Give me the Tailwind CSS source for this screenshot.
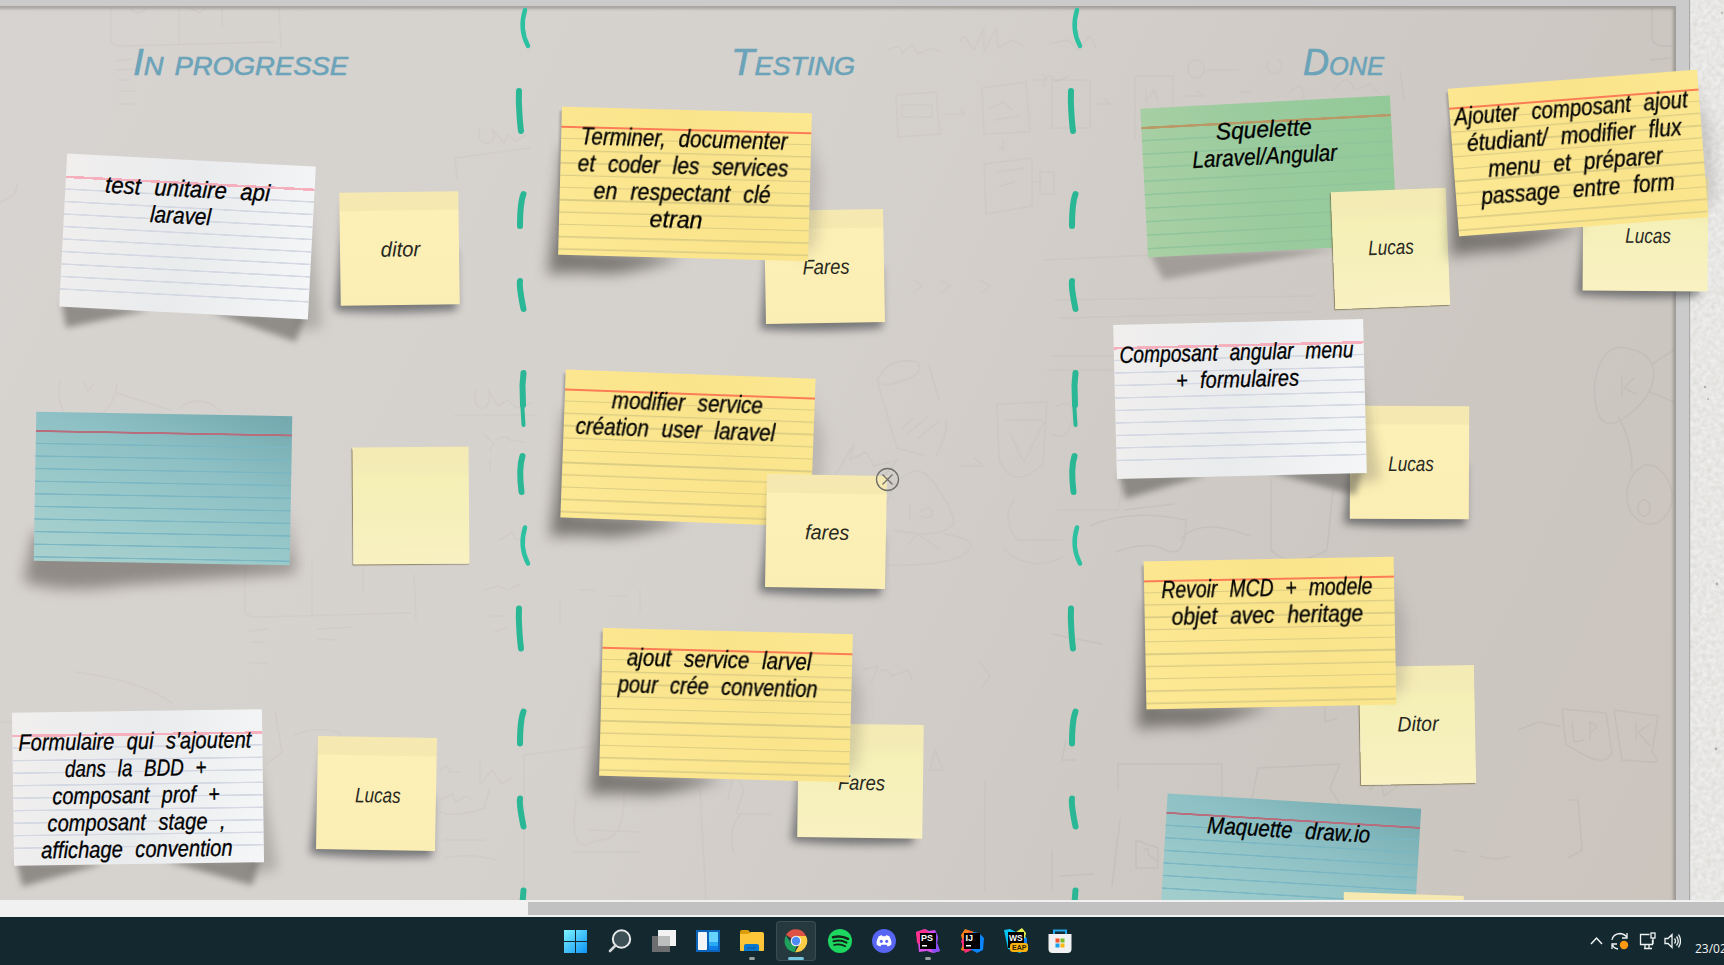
<!DOCTYPE html>
<html lang="fr">
<head>
<meta charset="utf-8">
<title>Scrum board</title>
<script src="https://cdn.jsdelivr.net/npm/@tailwindcss/browser@4"></script>
</head>
<body class="h-[965px] w-[1724px] overflow-hidden flex flex-col bg-[#dfdedb] font-['Liberation_Sans',sans-serif]">

<main class="relative flex h-[900px] shrink-0 overflow-hidden">
  <!-- whiteboard surface and frame -->
  <div class="relative w-[1689px] shrink-0 border-t-[6px] border-r-[13px] border-[#cbcbcb] bg-[linear-gradient(115deg,#d7d3d0_0%,#d5d1cd_42%,#ccc7c1_78%,#cbc5be_100%)] shadow-[1px_0_1px_#aaa]">
    <div class="h-full w-full shadow-[inset_-3px_3px_3px_rgba(0,0,0,.22)]"></div>
  </div>
  <div class="grow">
    <svg class="h-full w-full" viewBox="0 0 35 900"><filter id="grain"><feTurbulence type="fractalNoise" baseFrequency=".22" numOctaves="2"/><feColorMatrix values="0 0 0 0 1  0 0 0 0 1  0 0 0 0 1  .8 0 0 0 -.1"/></filter><rect width="35" height="900" fill="#dddcd9"/><rect width="35" height="900" filter="url(#grain)"/><g fill="#9a9896" opacity=".7"><circle cx="16" cy="387" r="1.3"/><circle cx="19" cy="399" r="1"/><circle cx="28" cy="584" r="1.4"/><circle cx="27" cy="749" r="1.4"/><circle cx="33" cy="13" r="1"/></g></svg>
  </div>

  <!-- erased sketches and column separators -->
  <svg class="absolute inset-0" width="1724" height="900" fill="none" stroke-linecap="round" stroke-linejoin="round">
    <g stroke="#6b6560" stroke-opacity=".045" stroke-width="1.500">
      <path d="M111 8V40Q114 47 122 46L275 42M179 8V45M222 8V26M279 8L281 48M115 61l16-2M116 70l22-1M118 80h12M119 91h16M119 104h15M130 8q8 10 16 0M190 8l10 5 6-5"/>
      <path d="M0 202Q18 196 17 184M60 380Q55 410 74 423Q112 420 117 385M117 393L170 410M180 408q20-16 42 4M84 383l4 8 6-7M245 539V612Q248 618 260 617L410 613M312 560V614M363 562V592M414 575L416 620M250 631l18-2M252 642h12M250 663h18M318 629l34-2M318 639l20 1M75 672Q140 680 172 703"/>
      <path d="M0 722h150M275 712l7 40-15 12M295 735q20-10 45-2 2 15-20 30M455 158l75-10M455 158l2 20M480 128q-4 16 8 15 10-2 4-14l12 14 4-8 8 6 10-6M476 390q-4 20 8 18 8-4 4-18l10 16 10-6 8 8 16-5M455 415h80M484 435l10 8-4 8M496 440q10-6 14 0l14 2M490 460v10M500 540l12-8 4 8 10-2M484 590l14-4 10 4 12-6M490 616h14M494 632l12-4"/>
      <path d="M440 770q8-8 10 2l10 0M480 762v22l12-14 10 14 10-6M440 800l12-6 4 8 10-6 6 4M490 788l-6 20M440 812q14 6 46-4M444 840h40M446 858q20-6 50 2M524 755L600 745M524 755V900M576 800q-8 60 20 40 30 4 28-50M590 830l50 2M574 852h66M700 790L706 900M728 800l6-30 10 20-8 24h34M742 812q-16 20-8 40M985 780V890M930 770l5-20 8 20z"/>
      <path d="M888 50q14-8 14 4l10-10 6 10 14-6 8 4M960 42q4-10 8 0l6 8 10-22v24l12-24 2 20 14-8 12 6M896 95l2 42 42-3-4-42zM902 105h30v12h-30zM945 114h20l-5-4M982 88l44-6 4 50-46 2zM990 108l14-6 8 8M994 120l24-4M1003 140v10l-4-4M984 164l48-6v48l-46 8zM998 172l26-4M1000 186l14-4M1040 172h14v22h-14zM1034 80h14l-6-6M1034 182h8M1043 86q4-18 12-4l14-6M914 280l8 6-8 6M942 280l8 6-8 6M980 280l10 6-8 6"/>
      <path d="M877 382q10-26 40-20 10 12-18 20-20 6-22-2l20 68 28 8M929 366l10 34M946 420q2 14-10 36M902 428l12-10M908 434l20-18M918 438l20-16M836 474l18-30-4 16 16-8 8 14 24-6-14 16 16 12M886 510q4-28 22-36 12-8 24 6 22 30 22 44-16 16-60 6M910 505v14M920 512q10-8 12 0t-12 4M848 550q10 20 80 14 40-4 44-20-10-8-28-10M908 544l10-10 20 14M960 466h24l-10-8M997 404l50-2-4 62q-30 28-44-4zM1006 420h36M1010 434l14 28 20-40M1014 500q-14 20 4 40h44M1004 550q30 24 60 6M560 600v24M580 590h14M610 596h16M640 590v22M862 670l16-4-6 16M880 672q6-6 12 4l16-6 4 10M980 662l10 14-8 12"/>
      <path d="M1048 44l20-4 10 10 12-14 6 12M1052 80h38v48h-38zM1098 104h12l-5-5M1135 76h38v62M1135 76v62M1146 90v12l8-12 4 10M1186 96h18l-6-4M1196 60a8 9 0 1 0 .1 0M1205 70h34M1240 92h10M1270 60q-8 8 4 14 14-4 4-14M1290 92q14-14 14 8M1334 90q14-20 20 0l16-6 10 10M1400 70l4 30M1045 260l130-6M1055 300l260-4M1060 318l250-6M1052 356h120M1048 370h80v80l-10 60h-60M1056 406q20-8 16 14t-20 14"/>
      <path stroke-opacity=".08" d="M1626 348c-22-6-36 26-30 58s30 14 46-4 20-48-16-54zM1622 376v20M1634 378l-10 10 12 6M1652 364l22-14M1650 392l24 10M1618 417Q1632 440 1632 470M1640 468c-16 10-18 40-2 52s36-4 34-26-22-36-32-26zM1644 500a6 8 0 1 0 .1 0M1652 8v30q2 10 20 8M1650 60l20-2M1648 80q10-6 24-2M1124 510l50-6M1090 526q40-18 96-6 0 40-20 30t-50 2M1180 540q20-24 70-4M1271 480v70q20 20 56 0l6-60"/>
      <path stroke-opacity=".08" d="M1118 764h104v40M1118 764v26M1258 768l82-4M1258 768l-6 30M1340 764l-10 24 10 16M1325 706v16l12-4M1370 790l10-14 4 20 14-10M1562 709l44 4 6 40q-6 12-24 4l-22-12zM1572 722l2 20 10-2M1590 740v-18q12 4 0 10M1614 710l44 6-6 36q10 12-2 10l-28-2zM1636 722v18M1650 724l-12 8 12 14M1518 730l20-8 22 4M1570 800h8l4 50 -14 8M1454 850l12 2M1480 856q16 6 30 0M1136 840v28h22v-20zM1144 850q6-4 4 4l10 8M1060 876l34-2M1120 820l-8 66M1066 740l-4 20h14M1052 634l50 10M1052 850v40"/>
    </g>
    <defs>
      <g id="dashes" stroke="#2ab795" stroke-width="6">
        <path d="M519 91L518.800 100Q519.500 120 521 131"/><path d="M523.500 194Q520 203 520 226"/><path d="M520 281Q519 287 523.500 309"/>
        <path d="M523.500 373L522.500 385L523 405"/><path d="M522 400L523.500 425" stroke-width="4"/><path d="M522.500 456Q518.500 468 521.500 492"/>
      </g>
      <path id="hook" d="M525 10Q519 29 528 46" stroke="#2cc1a1" stroke-width="4.500"/>
      <g id="lane"><use href="#hook"/><use href="#dashes"/><use href="#hook" y="517.500"/><use href="#dashes" y="517.500"/></g>
    </defs>
    <use href="#lane"/><use href="#lane" x="552"/>
  </svg>

  <!-- column titles -->
  <svg class="absolute inset-0" width="1724" height="100">
    <g class="text-[37px] italic [font-variant:small-caps]" fill="#6ba3b9" stroke="#6ba3b9" stroke-width=".6">
      <text x="133" y="75" textLength="215" lengthAdjust="spacingAndGlyphs">In progresse</text>
      <text x="731" y="75" textLength="124" lengthAdjust="spacingAndGlyphs">Testing</text>
      <text x="1303" y="75" textLength="81" lengthAdjust="spacingAndGlyphs">Done</text>
    </g>
  </svg>
  <!-- index cards and sticky notes -->
  <div id="notes"></div>

  <svg class="absolute left-[875px] top-[467px]" width="25" height="25" fill="none" stroke="#6f6e6a" stroke-width="1.300"><circle cx="12.500" cy="12.500" r="11"/><path d="M7.500 7.500l10 10M17.500 7.500l-10 10"/></svg>
</main>

<!-- horizontal scrollbar -->
<div class="h-[17px] shrink-0 bg-[#f1f1f1] pt-[2px]"><div class="ml-[528px] h-[13px] bg-[#c1c1c1]"></div></div>

<footer class="flex h-12 shrink-0 bg-[#13292f]">
  <div class="flex w-[1082px] shrink-0 justify-end">
    <div class="flex w-11 items-center justify-center"><svg width="24" height="24"><defs><linearGradient id="win" x2="1" y2="1" gradientUnits="objectBoundingBox"><stop stop-color="#7df3ff"/><stop offset="1" stop-color="#0c93f5"/></linearGradient></defs><path fill="url(#win)" d="M0 1h11v11H0zM12 1h11v11h-11zM0 13h11v11H0zM12 13h11v11h-11z"/></svg></div>
    <div class="flex w-11 items-center justify-center"><svg width="24" height="24"><circle cx="13.500" cy="10" r="8.700" fill="#3c5055" stroke="#e7e9ea" stroke-width="2"/><path d="M7.500 16.500L2 22" stroke="#d5d7d8" stroke-width="2.600" stroke-linecap="round"/></svg></div>
    <div class="flex w-11 items-center justify-center"><svg width="24" height="24"><path fill="#f3f3f3" d="M6 1h18v16H6z"/><path fill="#6c6d6e" d="M0 7h18v16H0z"/><path fill="#bcbdbd" d="M6 7h12v10H6z"/></svg></div>
    <div class="flex w-11 items-center justify-center"><svg width="24" height="24"><path fill="#0c64b8" d="M0 1h24v22H0z"/><rect x="2" y="3" width="9" height="18" rx="1" fill="#f3f5f7"/><path fill="#65d3fd" d="M13 3h9v10h-9z"/><path fill="#2aa9f4" d="M13 13h9v4h-9z"/><path fill="#0d7fe6" d="M13 17h9v4h-9z"/></svg></div>
    <div class="relative flex w-11 items-center justify-center"><svg width="24" height="24"><path fill="#dd9d08" d="M0 3q0-2 2-2h6l2 2v5H0z"/><path fill="#fdc638" d="M0 5h8l3-2h11q2 0 2 2v16q0 1-1 1H1q-1 0-1-1z"/><path fill="#0b78cf" d="M4 22v-5q0-2 2-2h11q2 0 2 2v5z"/><path stroke="#0a5ca8" stroke-width="1.200" d="M7 19h9"/></svg><i class="absolute bottom-[5px] h-[3px] w-1.5 rounded-full bg-[#979fa2]"></i></div>
    <div class="relative flex w-11 items-center justify-center"><div class="flex size-10 items-center justify-center rounded-[4px] border border-white/10 bg-white/8"><svg width="24" height="24" viewBox="0 0 24 24"><path fill="#de5145" d="M12 12L2 6A11.200 11.200 0 0 1 22 7z"/><path fill="#ffce45" d="M12 7h10A11.200 11.200 0 0 1 11 23.200L17 13z"/><path fill="#1fa15d" d="M2 6.500L7.500 15l5 2-2 6.200A11.200 11.200 0 0 1 2 6.500z"/><circle cx="12" cy="12" r="5.300" fill="#f4f4f4"/><circle cx="12" cy="12" r="4.200" fill="#4c8bf5"/></svg></div><i class="absolute bottom-[5px] h-[3px] w-4 rounded-full bg-[#76c7de]"></i></div>
    <div class="flex w-11 items-center justify-center"><svg width="24" height="24" fill="none" stroke="#122519" stroke-linecap="round"><circle cx="12" cy="12" r="12" fill="#1ed760" stroke="none"/><path stroke-width="2.500" d="M5 8.300q8-2.300 15 1.500"/><path stroke-width="2.100" d="M5.500 12.300q7-2 13 1.300"/><path stroke-width="1.700" d="M6 16q6-1.500 11.300 1.200"/></svg></div>
    <div class="flex w-11 items-center justify-center"><svg width="24" height="24"><circle cx="12" cy="12" r="12" fill="#5765f2"/><path fill="#fff" d="M6.500 7.500q2-1.200 3.500-1.300l.6 1h2.800l.6-1q1.500.1 3.500 1.300 2.300 4 1.900 8-1.600 1.400-3.800 1.900l-.9-1.600H9.300l-.9 1.600q-2.200-.5-3.800-1.900-.4-4 1.900-8z"/><ellipse cx="9.300" cy="12.300" rx="1.500" ry="1.600" fill="#5765f2"/><ellipse cx="14.700" cy="12.300" rx="1.500" ry="1.600" fill="#5765f2"/></svg></div>
    <div class="relative flex w-11 items-center justify-center"><svg width="24" height="24"><path fill="#d84fe8" d="M0 3l9-3 4 2 6-1 3 7-1 6 3 8-7 2-6-2-8 1-1-10z"/><path fill="#ff318c" d="M0 3l9-3 4 4-9 11-3-1z"/><path fill="#8a4df5" d="M19 1l3 7-1 6 3 8-7 2-2-5z"/><path d="M4 4h16v16H4z"/><text x="5" y="12" fill="#fff" class="text-[9px] font-bold">PS</text><path fill="#fff" d="M6 16h5v1.500H6z"/></svg><i class="absolute bottom-[5px] h-[3px] w-1.5 rounded-full bg-[#979fa2]"></i></div>
    <div class="flex w-11 items-center justify-center"><svg width="24" height="24"><path fill="#fc801d" d="M1 6l4-6 9 3-6 20-7-2 2-7z"/><path fill="#fe2b76" d="M1 12l8-9 8 2-3 15-9 4z"/><path fill="#0a84ff" d="M13 3l6 1 5 5-1 12-6 3-7-4z"/><path d="M4 4h16v16H4z"/><text x="5.500" y="12" fill="#fff" class="text-[9px] font-bold">IJ</text><path fill="#fff" d="M6 16h5v1.500H6z"/></svg></div>
    <div class="flex w-11 items-center justify-center"><svg width="26" height="26" viewBox="-1 0 26 26"><path fill="#07c3f2" d="M0 2l6-1 6 3 10 5 2 12-8 4-12-4z"/><path fill="#e4f24e" d="M12 4l6-4 4 5-1 5z"/><path fill="#087cfa" d="M4 15l10 9 9-2V10z"/><path d="M4 4h16v16H4z"/><text x="5" y="12.500" fill="#fff" class="text-[8.500px] font-bold">WS</text><rect x="6" y="15" width="18" height="9" rx="3" fill="#f9b20e"/><text x="8" y="22.300" fill="#2b2100" class="text-[7px] font-bold">EAP</text></svg></div>
    <div class="flex w-11 items-center justify-center"><svg width="24" height="24"><path d="M6 6V1.500h12V6" fill="none" stroke="#23a5ea" stroke-width="2"/><path fill="#f0f1f2" d="M.500 5h23v15q0 4-4 4H4.500q-4 0-4-4z"/><path fill="#f2532f" d="M7.500 9.500h4v4h-4z"/><path fill="#7fba28" d="M12.500 9.500h4v4h-4z"/><path fill="#1ba2ea" d="M7.500 14.500h4v4h-4z"/><path fill="#fcb813" d="M12.500 14.500h4v4h-4z"/></svg></div>
  </div>
  <div class="flex grow items-center justify-end overflow-hidden text-[#f0f3f4]">
    <svg class="mr-[8px]" width="14" height="24" fill="none" stroke="#f0f3f4" stroke-width="1.500"><path d="M2 15l5.500-6L13 15"/></svg>
    <svg class="mr-[10px]" width="18" height="18" fill="none" stroke="#f0f3f4" stroke-width="1.300"><path d="M1 8q1-6 8-6.500 5 .5 7 4M16 1v5h-5M7 17q-5-1-5-4M1 17v-5h5"/><circle cx="13" cy="13" r="4.200" fill="#ff9811" stroke="none"/></svg>
    <svg class="mr-[8px]" width="17" height="18" fill="none" stroke="#f0f3f4" stroke-width="1.300"><path d="M10.500 2.500H1.500v10h12V8M5 16.500h8M6 12.500v4M10 12.500v4"/><rect x="12" y="1" width="4" height="5" fill="#13292f"/><path d="M14 6v6"/></svg>
    <svg class="mr-[14px]" width="17" height="18" fill="none" stroke="#f0f3f4" stroke-width="1.300"><path d="M1 6.500h3l4-4v13l-4-4H1zM10.500 6.500q2 2.500 0 5M12.500 4.500q3.500 4.500 0 9M14.500 2.500q4 6.500 0 13"/></svg>
    <span class="w-[29px] overflow-hidden whitespace-nowrap pt-4 font-['Open_Sans'] text-[12px] leading-4">23/02</span>
  </div>
</footer>

<script>
// Card: [kind, centre x, centre y, width, height, rotation, first baseline, [[line, width, x shift], ...]]
const white = (...a) => ['white', ...a], yellow = (...a) => ['yellow', ...a], teal = (...a) => ['teal', ...a];
const items = [
  white(187, 236, 249, 153, 3, 37, [['test unitaire api', 165, -2.4], ['laravel', 61, -8]]),
  ['sticky', 399, 248, 119, 113, -.8, 64.500, [['ditor', 39.500, 1]]],
  teal(162.500, 488, 256, 149, 1, 37, []),
  ['pale', 411.300, 505.200, 116, 117, -.5, 65, []],
  white(137.800, 787.700, 250, 153, -.8, 38, [["Formulaire qui s'ajoutent", 233, -2.500], ['dans la BDD +', 141.500, -2], ['composant prof +', 167.400, -2], ['composant stage ,', 178, -2], ['affichage convention', 191.400, -2]]),
  ['sticky', 376.300, 793.800, 119, 113, 1, 65.500, [['Lucas', 45.500, 1.500]]],
  ['sticky', 824, 266.500, 119, 113, -1, 64, [['Fares', 47, 1.500]]],
  yellow(684.700, 183.600, 250, 147.500, 1.500, 37, [['Terminer, documenter', 207, -2], ['et coder les services', 210.500, -2.400], ['en respectant clé', 177, -2.700], ['etran', 53, -8]]),
  yellow(687.700, 447.300, 249.500, 147.500, 2.100, 37, [['modifier service', 151, -2], ['création user laravel', 199.600, -13]]),
  ['sticky', 825.300, 531, 119.500, 113, 1, 64.500, [['fares', 44, 1.500]]],
  ['paleshade', 860, 780.500, 125, 114, .8, 66, [['Fares', 47, 1]]],
  yellow(725.700, 704.300, 249.500, 147.500, 1.500, 37, [['ajout service larvel', 184.600, -7.800], ['pour crée convention', 199.700, -8.500]]),
  ['green', 1268.300, 176, 249.500, 149, -3, 35, [['Squelette', 96, -2.400], ['Laravel/Angular', 145, -3]]],
  ['pale', 1390.700, 248.700, 115, 117, -2.200, 64.500, [['Lucas', 45.500, .5]]],
  ['paleshade', 1645, 234, 125, 114, .4, 66, [['Lucas', 45.500, 2.500]]],
  yellow(1577.500, 153, 249.500, 147.500, -4.400, 37, [['Ajouter composant ajout', 234, -3.400], ['étudiant/ modifier flux', 215, -2.300], ['menu et préparer', 175, -3], ['passage entre form', 194, -2.600]]),
  ['sticky', 1409.300, 462.500, 119, 113, .2, 65, [['Lucas', 45.500, 1.500]]],
  white(1240.300, 399, 250, 153.500, -1.400, 38, [['Composant angular menu', 234, -2.400], ['+ formulaires', 123, -2]]),
  ['pale', 1417.500, 724.500, 115, 118, -1.100, 65, [['Ditor', 41, .5]]],
  yellow(1269.600, 632.600, 249.500, 147.500, -1.100, 37, [['Revoir MCD + modele', 211, -2], ['objet avec heritage', 191.500, -2]]),
  teal(1290, 875.600, 254, 149, 3.400, 37, [['Maquette draw.io', 163, -4]]),
  ['sticky', 1401.500, 950, 120, 113, 1.900, 65, []],
];
const paper = {
  white: 'bg-[linear-gradient(to_bottom,transparent_22px,#f6b0bd_22px,#f6b0bd_24.500px,transparent_24.500px),repeating-linear-gradient(to_bottom,transparent_0px,transparent_10.400px,#d4d8e2_11px,#d4d8e2_12px,transparent_12.500px),linear-gradient(100deg,#f1efee,#e9ebed_50%,#f5f6f7)] [background-size:auto,100%_118px,auto] [background-position:0_0,0_24px,0_0] bg-no-repeat',
  yellow: 'bg-[linear-gradient(to_bottom,transparent_18.500px,#fb7c55_19px,#fb7c55_20.500px,transparent_21px),repeating-linear-gradient(to_bottom,transparent_0px,transparent_10.500px,#dccd84_11px,#dccd84_12px,transparent_12.300px),linear-gradient(60deg,#fde994,#fae48b_60%,#fbe891)] [background-size:auto,100%_126px,auto] [background-position:0_0,0_20px,0_0] bg-no-repeat',
  teal: 'bg-[linear-gradient(to_bottom,transparent_18px,#b76d7b_18.500px,#b76d7b_20px,transparent_20.500px),repeating-linear-gradient(to_bottom,transparent_0px,transparent_10.600px,#7bb6c3_11.200px,#7bb6c3_12px,transparent_12.600px),linear-gradient(200deg,#72a9ae_0%,#8dc0c4_35%,#9dcbcb_70%,#a9d1ce_100%)] [background-size:auto,100%_129px,auto] [background-position:0_0,0_20px,0_0] bg-no-repeat',
  green: 'bg-[linear-gradient(to_bottom,transparent_18px,#b99a67_18.500px,#b99a67_20.500px,transparent_21px),repeating-linear-gradient(to_bottom,transparent_0px,transparent_11px,#90c49b_12px,#90c49b_12.500px,transparent_13.500px),linear-gradient(80deg,#aad0a5,#9acb9e_45%,#93c999)] [background-size:auto,100%_129px,auto] [background-position:0_0,0_20px,0_0] bg-no-repeat',
  sticky: 'bg-[linear-gradient(to_bottom,#f5e9b1_0px,#f5e9b1_18px,#fcf0b6_19px,#fbeeb4_100%)]',
  pale: 'bg-[linear-gradient(to_bottom,#f3eab4_0px,#f4ecb6_24px,#f5f0b6_32px,#f5f0bb_60%,#f9f1c1_100%)] shadow-[-1px_1px_1px_rgba(110,100,60,.7)]',
  paleshade: 'bg-[linear-gradient(to_bottom,#f3eab4_0px,#f4ecb6_24px,#f5f0b6_32px,#f6f1bc_60%,#f9f1c1_100%)]',
};
// Curled-paper shadows, drawn in the card's own frame.
const curl = '<g fill="#45484c"><path class="blur-[4px]" opacity=".65" d="M6 8L-6 118Q50 123 116 119V60z"/></g>';
const shade = {
  white: '<g class="blur-[3px]" fill="#4a4744"><path opacity=".5" d="M2 148L90 152L8 174zM150 150L247 148L238 176z"/></g><path class="blur-[6px]" fill="#4a4744" opacity=".25" d="M242 30L264 160L240 166z"/>',
  yellow: '<g class="blur-[7px]" fill="#4a4744"><path opacity=".65" d="M2 40L8 40V142L125 147Q75 164 50 166Q10 164 -10 168z"/><path opacity=".2" d="M240 8L260 60L258 130L240 146z"/></g><path class="blur-[1px]" fill="#777" opacity=".5" d="M-2 4h40v144H-2z"/>',
  teal: '<g class="blur-[7px]" fill="#625b57"><path opacity=".6" d="M0 120L-10 170Q30 182 90 172L262 156L252 90V145z"/></g>',
  green: '<g class="blur-[3px]" fill="#5c5853"><path opacity=".4" d="M2 145L190 150L14 172z"/></g>',
  sticky: curl, paleshade: curl,
};
// Each handwritten line has its own length.
const write = (lines, cx, base, big) => `<g text-anchor="middle" class="${big
    ? 'fill-black stroke-black [stroke-width:.3px] text-[23.5px] italic [word-spacing:8px]'
    : 'fill-[#28281f] text-[21px] italic'}">${lines.map(([t, w, x], i) =>
    `<text x="${cx + x}" y="${base + i * 27}" textLength="${w}" lengthAdjust="spacingAndGlyphs">${t}</text>`).join('')}</g>`;
document.getElementById('notes').innerHTML = items.map(([k, cx, cy, w, h, r, base, lines]) => `
  <article class="absolute" style="left:${cx - w / 2}px;top:${cy - h / 2}px;width:${w}px;height:${h}px;transform:rotate(${r}deg)">
    <svg class="absolute inset-0 h-full w-full overflow-visible">${shade[k] || ''}</svg>
    <div class="relative h-full w-full ${paper[k]}"><svg class="h-full w-full overflow-visible">${write(lines, w / 2, base, w > 200)}</svg></div>
  </article>`).join('');
</script>
</body>
</html>
